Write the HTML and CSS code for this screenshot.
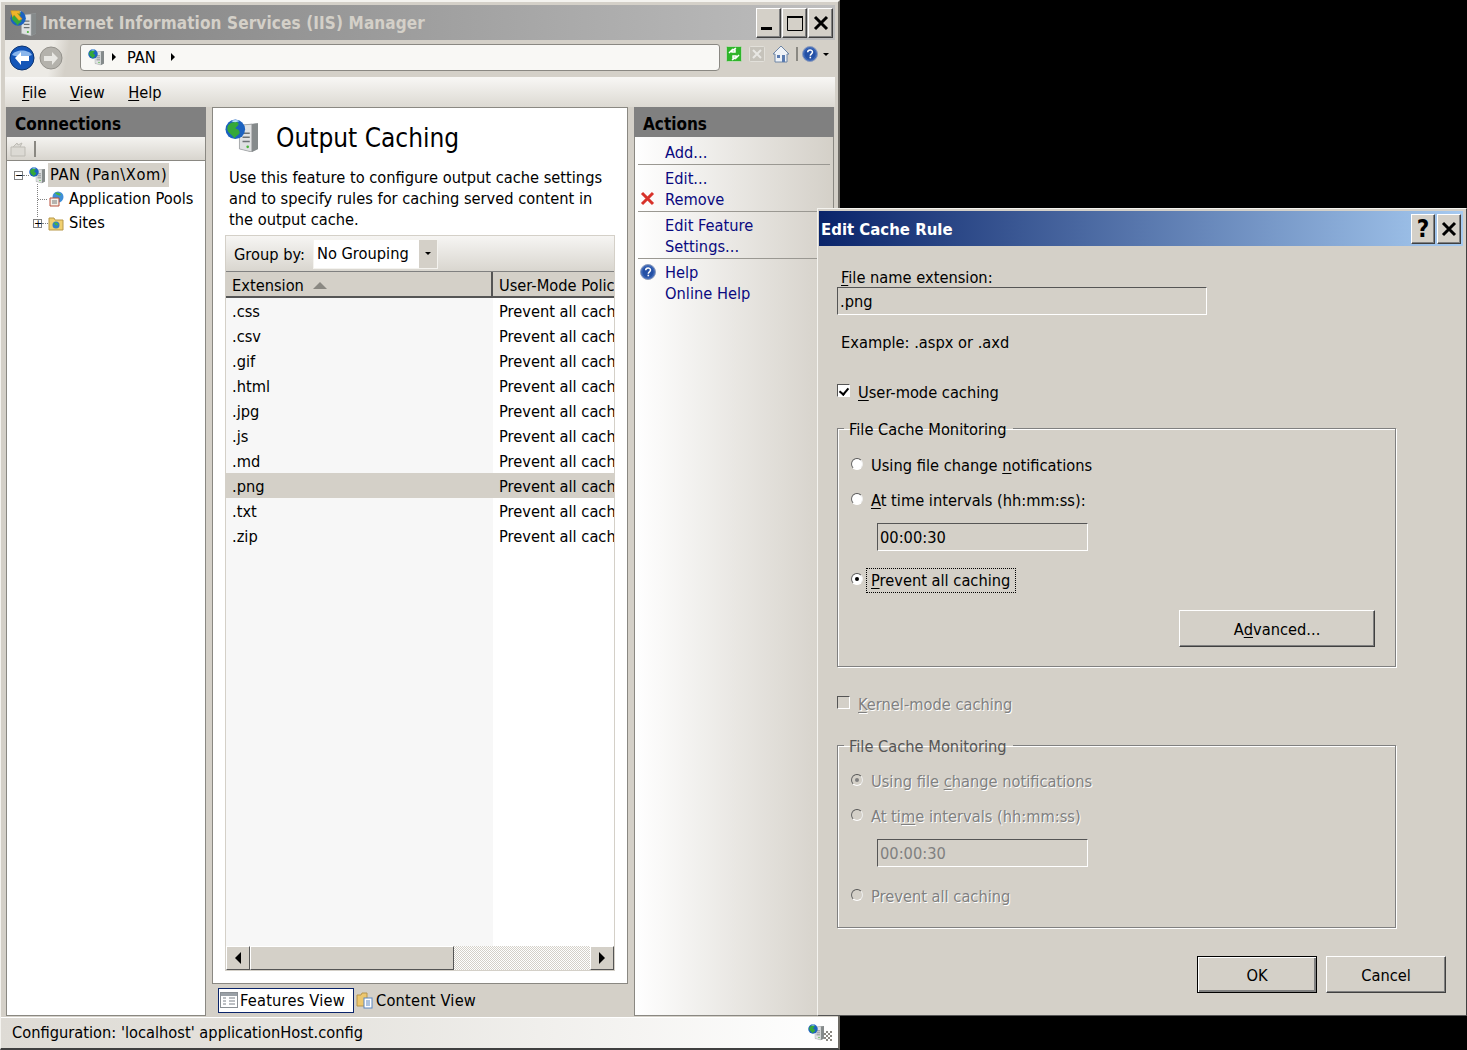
FILE: index.html
```html
<!DOCTYPE html>
<html lang="en">
<head>
    <meta charset="UTF-8">
    <title>Internet Information Services (IIS) Manager</title>
    <link rel="stylesheet" href="styles.css">
</head>
<body>
    <svg class="sprite" aria-hidden="true">
        <symbol id="server" viewBox="0 0 32 32">
            <path d="M14 6l18-2v25l-6 3-12-3z" fill="#a9adae"/>
            <path d="M26 5l6-1v25l-6 3z" fill="#858a8b"/>
            <path d="M14 6l12-1v27l-12-3z" fill="#dfe1e2" stroke="#8b8f90" stroke-width=".6"/>
            <path d="M17 13h7v1.500h-7zM17 17h7v1.500h-7zM17 21h7v1.500h-7z" fill="#6d7274"/>
            <circle cx="22" cy="27" r="1.300" fill="#49b53a"/>
            <circle cx="10" cy="10" r="9.500" fill="#1c62c0"/>
            <path d="M3 6c3-3 8-4 10-2 1 2-2 3-3 5 2 1 5 2 4 5-2 2-4 3-5 5-1-3-4-4-6-7-1-2-1-4 0-6z" fill="#35a83a"/>
            <path d="M6 2c3-1.600 6-1.300 8 0-2 1-5 2-8 0z" fill="#b5e0fa"/>
        </symbol>
        <symbol id="help" viewBox="0 0 16 16">
            <circle cx="8" cy="8" r="7.500" fill="#3d68b8" stroke="#8d9cbc"/>
            <circle cx="8" cy="8" r="5.500" fill="#2450a5"/>
            <path d="M5.700 6.300c0-3 4.800-3 4.800-.2 0 1.800-2.200 1.700-2.200 3.600" fill="none" stroke="#fff" stroke-width="1.500"/>
            <rect x="7.500" y="10.700" width="1.600" height="1.600" fill="#fff"/>
        </symbol>
    </svg>

    <div class="desktop">
        <div class="app">
            <div class="app-title">
                <svg class="app-icon" viewBox="0 0 32 32">
                    <use href="#server" width="32" height="32"/>
                    <path d="M1 1h11v4l-3-1 6 7-4 2-6-7-2 3z" fill="#f0b52a" stroke="#c98a14" stroke-width=".6"/>
                </svg>
                <span class="app-title-text">Internet Information Services (IIS) Manager</span>
                <div class="caption-btns main">
                    <span class="caption-btn wide"><svg width="16" height="16" viewBox="0 0 16 16"><rect x="0" y="12" width="11" height="3"/></svg></span>
                    <span class="caption-btn wide"><svg width="16" height="16" viewBox="0 0 16 16"><path d="M.5 2.500h15v13H.5z" fill="none" stroke="#000"/><rect x="0" y="1" width="16" height="2"/></svg></span>
                    <span class="caption-btn wide"><svg width="16" height="16" viewBox="0 0 16 16"><path d="M2 2l12 12M14 2L2 14" stroke="#000" stroke-width="3"/></svg></span>
                </div>
            </div>

            <div class="nav">
                <div class="nav-arrows">
                    <svg width="26" height="26" viewBox="0 0 26 26">
                        <circle cx="13" cy="13" r="12" fill="#1456b8" stroke="#0c3470"/>
                        <path d="M3 10c3-6 17-6 20 0-5 2-15 2-20 0z" fill="#8ab6ec"/>
                        <path d="M6 13l6-6v4h8v5h-8v4z" fill="#fff"/>
                    </svg>
                    <svg width="24" height="24" viewBox="0 0 24 24">
                        <circle cx="12" cy="12" r="11" fill="#b4b2ac" stroke="#94928c"/>
                        <path d="M19 12l-6-6v4H5v5h8v4z" fill="#e8e7e3"/>
                    </svg>
                </div>
                <div class="address">
                    <svg class="addr-icon"><use href="#server"/></svg>
                    <span class="crumb-arrow"></span>
                    <span class="crumb">PAN</span>
                    <span class="crumb-arrow"></span>
                </div>
                <div class="nav-tools">
                    <svg width="16" height="16" viewBox="0 0 16 16">
                        <rect x=".5" y=".5" width="15" height="15" rx="1" fill="#2fb52b" stroke="#b8d8b0"/>
                        <path d="M3 7l3-3v2h3V4l-2 0 3-2M13 9l-3 3v-2H7v2l2 0-3 2" fill="none" stroke="#fff" stroke-width="1.500"/>
                    </svg>
                    <svg width="16" height="16" viewBox="0 0 16 16">
                        <rect x=".5" y=".5" width="15" height="15" rx="1" fill="#c6c3bb" stroke="#e2e0da"/>
                        <path d="M4 4l8 8M12 4l-8 8" stroke="#e8e7e3" stroke-width="2"/>
                    </svg>
                    <svg width="18" height="18" viewBox="0 0 18 18">
                        <path d="M1 9l8-8 8 8h-2v8H3V9z" fill="#eef2f7" stroke="#6f86a6"/>
                        <rect x="10" y="10" width="3" height="7" fill="#5a7bb0"/>
                        <rect x="5" y="10" width="3" height="3" fill="#5a7bb0"/>
                    </svg>
                    <span class="tool-sep"></span>
                    <svg width="16" height="16"><use href="#help"/></svg>
                    <span class="tool-drop"></span>
                </div>
            </div>

            <div class="menubar">
                <span><u>F</u>ile</span>
                <span><u>V</u>iew</span>
                <span><u>H</u>elp</span>
            </div>

            <div class="panes">
                <div class="pane connections">
                    <div class="pane-head">Connections</div>
                    <div class="conn-tools">
                        <svg width="16" height="16" viewBox="0 0 16 16">
                            <path d="M1 6h14v9H1zM3 6l4-4 1 2 4-2-2 4" fill="#dcdad4" stroke="#bdbbb4"/>
                        </svg>
                        <span class="conn-sep"></span>
                    </div>
                    <div class="tree">
                        <div class="tree-row">
                            <span class="expander">&minus;</span>
                            <svg class="tree-icon"><use href="#server"/></svg>
                            <span class="tree-label selected">PAN (Pan\Xom)</span>
                        </div>
                        <div class="tree-row child">
                            <span class="tree-dots"></span>
                            <svg class="tree-icon" viewBox="0 0 16 16">
                                <circle cx="10" cy="6" r="5.500" fill="#3f8fd8"/>
                                <path d="M7 2c2-1 5 0 6 2-2 1-4 0-6-2z" fill="#49b53a"/>
                                <path d="M2 7h9v8H2z" fill="#f4f0e8" stroke="#b8503c"/>
                                <path d="M4 10h5M4 12h5" stroke="#777"/>
                            </svg>
                            <span class="tree-label">Application Pools</span>
                        </div>
                        <div class="tree-row child">
                            <span class="expander plus">+</span>
                            <svg class="tree-icon" viewBox="0 0 16 16">
                                <path d="M1 3h5l1 2h8v10H1z" fill="#f0d070" stroke="#b89848"/>
                                <circle cx="8" cy="10" r="3.500" fill="#2f80c8"/>
                                <path d="M6 8c2-1 4 0 4 2-2 1-3 0-4-2z" fill="#49b53a"/>
                            </svg>
                            <span class="tree-label">Sites</span>
                        </div>
                    </div>
                </div>

                <div class="center">
                    <div class="pane content">
                        <div class="page-head">
                            <svg class="page-icon"><use href="#server"/></svg>
                            <h1>Output Caching</h1>
                        </div>
                        <p class="page-desc">Use this feature to configure output cache settings and to specify rules for caching served content in the output cache.</p>
                        <div class="list-box">
                            <div class="group-bar">
                                <span>Group by:</span>
                                <div class="combo">
                                    <span class="combo-value">No Grouping</span>
                                    <span class="combo-btn"></span>
                                </div>
                            </div>
                            <div class="list-head">
                                <div class="col-ext">Extension <span class="sort-up"></span></div>
                                <div class="col-policy">User-Mode Policy</div>
                            </div>
                            <div class="list-body">
                                <div class="row"><div class="col-ext">.css</div><div class="col-policy">Prevent all caching</div></div>
                                <div class="row"><div class="col-ext">.csv</div><div class="col-policy">Prevent all caching</div></div>
                                <div class="row"><div class="col-ext">.gif</div><div class="col-policy">Prevent all caching</div></div>
                                <div class="row"><div class="col-ext">.html</div><div class="col-policy">Prevent all caching</div></div>
                                <div class="row"><div class="col-ext">.jpg</div><div class="col-policy">Prevent all caching</div></div>
                                <div class="row"><div class="col-ext">.js</div><div class="col-policy">Prevent all caching</div></div>
                                <div class="row"><div class="col-ext">.md</div><div class="col-policy">Prevent all caching</div></div>
                                <div class="row selected"><div class="col-ext">.png</div><div class="col-policy">Prevent all caching</div></div>
                                <div class="row"><div class="col-ext">.txt</div><div class="col-policy">Prevent all caching</div></div>
                                <div class="row"><div class="col-ext">.zip</div><div class="col-policy">Prevent all caching</div></div>
                            </div>
                            <div class="hscroll">
                                <span class="sb-btn"><span class="tri-left"></span></span>
                                <span class="sb-thumb"></span>
                                <span class="sb-track"></span>
                                <span class="sb-btn"><span class="tri-right"></span></span>
                            </div>
                        </div>
                    </div>
                    <div class="view-tabs">
                        <div class="view-tab active">
                            <svg width="18" height="18" viewBox="0 0 18 18">
                                <rect x=".5" y="1.500" width="17" height="15" fill="#fff" stroke="#8a8f94"/>
                                <rect x="1" y="2" width="16" height="3" fill="#9aa0a6"/>
                                <path d="M3 7h3M3 10h3M3 13h3M9 7h6M9 10h6M9 13h6" stroke="#7b8088"/>
                            </svg>
                            <span>Features View</span>
                        </div>
                        <div class="view-tab">
                            <svg width="18" height="18" viewBox="0 0 18 18">
                                <path d="M1 4h4l1-2h5v13H1z" fill="#edc76e" stroke="#b8964c"/>
                                <rect x="8" y="7" width="8" height="10" fill="#fff" stroke="#5a86c0"/>
                                <path d="M10 10h4M10 12h4M10 14h4" stroke="#5a86c0"/>
                            </svg>
                            <span>Content View</span>
                        </div>
                    </div>
                </div>

                <div class="pane actions">
                    <div class="pane-head">Actions</div>
                    <div class="action-group first">
                        <a>Add...</a>
                    </div>
                    <div class="action-group">
                        <a>Edit...</a>
                        <a>
                            <svg class="action-icon" width="15" height="15" viewBox="0 0 15 15"><path d="M2 2l11 11M13 2L2 13" stroke="#d8322a" stroke-width="3"/></svg>
                            Remove
                        </a>
                    </div>
                    <div class="action-group">
                        <a>Edit Feature<br>Settings...</a>
                    </div>
                    <div class="action-group last">
                        <a>
                            <svg class="action-icon" width="16" height="16"><use href="#help"/></svg>
                            Help
                        </a>
                        <a>Online Help</a>
                    </div>
                </div>
            </div>

            <div class="statusbar">
                <span>Configuration: 'localhost' applicationHost.config</span>
                <svg class="status-icon"><use href="#server"/></svg>
                <span class="grip"></span>
            </div>
        </div>

        <div class="dialog">
            <div class="dlg-title">
                <span>Edit Cache Rule</span>
                <div class="caption-btns">
                    <span class="caption-btn dlg"><b class="q">?</b></span>
                    <span class="caption-btn dlg"><svg width="16" height="16" viewBox="0 0 16 16"><path d="M2 2l12 12M14 2L2 14" stroke="#000" stroke-width="3"/></svg></span>
                </div>
            </div>
            <div class="dlg-body">
                <div class="field-label"><u>F</u>ile name extension:</div>
                <div class="sunken ext-input">.png</div>
                <div class="example">Example: .aspx or .axd</div>

                <div class="check-row">
                    <span class="checkbox on"></span>
                    <span><u>U</u>ser-mode caching</span>
                </div>
                <fieldset class="group">
                    <legend>File Cache Monitoring</legend>
                    <div class="radio-row r1"><span class="radio"></span><span>Using file change <u>n</u>otifications</span></div>
                    <div class="radio-row r2"><span class="radio"></span><span><u>A</u>t time intervals (hh:mm:ss):</span></div>
                    <div class="sunken time-input">00:00:30</div>
                    <div class="radio-row r3"><span class="radio on"></span><span class="focused"><u>P</u>revent all caching</span></div>
                    <div class="adv-row"><span class="btn adv">A<u>d</u>vanced...</span></div>
                </fieldset>

                <div class="check-row disabled second">
                    <span class="checkbox off"></span>
                    <span><u>K</u>ernel-mode caching</span>
                </div>
                <fieldset class="group lower disabled">
                    <legend>File Cache Monitoring</legend>
                    <div class="radio-row r1"><span class="radio on"></span><span>Using file <u>c</u>hange notifications</span></div>
                    <div class="radio-row r2"><span class="radio"></span><span>At ti<u>m</u>e intervals (hh:mm:ss)</span></div>
                    <div class="sunken time-input">00:00:30</div>
                    <div class="radio-row r3"><span class="radio"></span><span>Prevent all caching</span></div>
                </fieldset>

                <div class="dlg-buttons">
                    <span class="btn default">OK</span>
                    <span class="btn">Cancel</span>
                </div>
            </div>
        </div>
    </div>
</body>
</html>
```

FILE: styles.css
```css
* {
    box-sizing: border-box;
}
html, body {
    margin: 0;
    height: 100%;
    overflow: hidden;
    background: #000;
}
body {
    font-family: "DejaVu Sans", Tahoma, sans-serif;
    font-stretch: condensed;
    font-size: 16.3px;
    color: #000;
}
u {
    text-underline-offset: 2px;
}
.sprite {
    width: 0;
    height: 0;
    display: block;
}
.desktop {
    position: relative;
    width: 1467px;
    height: 1050px;
    background: #000;
}

/* main window */
.app {
    width: 840px;
    height: 1050px;
    display: flex;
    flex-direction: column;
    background: #d4d0c8;
    border-top: 2px solid #f4f3ef;
    border-left: 1px solid #f4f3ef;
    border-right: 2px solid #6d6a64;
    border-bottom: 2px solid #404040;
    padding: 3px 3px 0 4px;
}
.app-title {
    height: 35px;
    flex: none;
    display: flex;
    align-items: center;
    padding: 0 2px 0 5px;
    background: linear-gradient(to right, #7f7f7f, #bebebe);
    color: #d4d0c8;
    font-weight: bold;
    font-size: 17px;
    letter-spacing: .12px;
}
.app-icon {
    width: 26px;
    height: 26px;
    margin-right: 6px;
}
.app-title-text {
    flex: 1;
    white-space: nowrap;
}
.caption-btns {
    display: flex;
    gap: 2px;
}
.caption-btns.main {
    gap: 1px;
}
.caption-btn {
    display: flex;
    align-items: center;
    justify-content: center;
    background: #d4d0c8;
    color: #000;
    border: 1px solid;
    border-color: #fff #404040 #404040 #fff;
    box-shadow: inset -1px -1px 0 #808080;
}
.caption-btn.wide {
    width: 25px;
    height: 30px;
}
.caption-btn.dlg {
    width: 24px;
    height: 30px;
}
.caption-btn .q {
    font-size: 24px;
    line-height: 1;
}

/* back / address bar */
.nav {
    height: 37px;
    flex: none;
    display: flex;
    align-items: center;
}
.nav-arrows {
    width: 75px;
    padding: 0 0 2px 4px;
    display: flex;
    align-items: center;
    gap: 4px;
    height: 37px;
    background: linear-gradient(100deg, #eceae5 60%, #d4d0c8 80%);
}
.address {
    width: 640px;
    height: 27px;
    display: flex;
    align-items: center;
    background: #f9f8f5;
    border: 1px solid #8a8882;
    border-radius: 3px 3px 4px 4px;
    padding-left: 7px;
    margin-bottom: 3px;
}
.addr-icon {
    width: 16px;
    height: 18px;
    margin-right: 8px;
}
.crumb-arrow {
    width: 0;
    height: 0;
    border-left: 4px solid #000;
    border-top: 4px solid transparent;
    border-bottom: 4px solid transparent;
}
.crumb {
    margin: 1px 15px 0 11px;
}
.nav-tools {
    display: flex;
    align-items: center;
    padding-left: 6px;
    gap: 7px;
    margin-bottom: 9px;
}
.tool-sep {
    width: 2px;
    height: 14px;
    background: #8a8882;
    margin-left: -1px;
    margin-right: -3px;
}
.tool-drop {
    width: 0;
    height: 0;
    border-top: 3px solid #000;
    border-left: 3px solid transparent;
    border-right: 3px solid transparent;
    margin-left: -2px;
}

/* menu */
.menubar {
    height: 30px;
    flex: none;
    display: flex;
    align-items: center;
    gap: 23.5px;
    padding: 0 0 0 17px;
    background: linear-gradient(to bottom, #f8f7f5, #dcd9d2);
}

/* three panes */
.panes {
    flex: 1;
    min-height: 0;
    display: flex;
    gap: 6px;
    padding: 0 0 0 1px;
}
.pane {
    border: 1px solid #8a8882;
    background: #fff;
}
.pane-head {
    height: 30px;
    padding: 7px 0 0 9px;
    background: #808080;
    font-weight: bold;
    font-size: 17px;
    line-height: 20px;
    margin: -1px -1px 0;
}
.connections {
    width: 200px;
    display: flex;
    flex-direction: column;
}
.conn-tools {
    height: 24px;
    flex: none;
    display: flex;
    align-items: center;
    gap: 8px;
    padding-left: 3px;
    background: linear-gradient(to bottom, #f4f3f0, #d8d5ce);
    border-bottom: 1px solid #8a8882;
}
.conn-sep {
    width: 2px;
    height: 16px;
    background: #8a8882;
}
.tree {
    padding-top: 2px;
}
.tree-row {
    height: 24px;
    display: flex;
    align-items: center;
    white-space: nowrap;
    padding-left: 7px;
}
.expander {
    width: 9px;
    height: 9px;
    border: 1px solid #808080;
    font-size: 11px;
    line-height: 7px;
    text-align: center;
    margin-right: 6px;
    background: #fff;
    flex: none;
    position: relative;
}
.expander::after {
    content: "";
    position: absolute;
    left: 8px;
    top: 3px;
    width: 6px;
    border-top: 1px dotted #808080;
}
.expander.plus {
    margin-left: 19px;
    margin-right: 6px;
}
.tree-dots {
    width: 9px;
    height: 1px;
    margin-left: 24px;
    margin-right: 1px;
    border-top: 1px dotted #808080;
    position: relative;
}
.tree-dots::before {
    content: "";
    position: absolute;
    left: -1px;
    top: -16px;
    height: 33px;
    border-left: 1px dotted #808080;
}
.tree-icon {
    width: 16px;
    height: 18px;
    flex: none;
    margin-right: 3px;
}
.tree-label {
    padding: 0 2px;
    height: 24px;
    line-height: 24px;
}
.tree-label.selected {
    background: #d4d0c8;
    letter-spacing: .6px;
}

/* center */
.center {
    width: 416px;
    display: flex;
    flex-direction: column;
}
.content {
    flex: 1;
    min-height: 0;
    display: flex;
    flex-direction: column;
    padding: 0 13px 12px 12px;
}
.page-head {
    height: 59px;
    flex: none;
    display: flex;
    align-items: flex-start;
}
.page-icon {
    width: 33px;
    height: 33px;
    margin-top: 11px;
    flex: none;
}
h1 {
    margin: 11px 0 0 18px;
    font-weight: normal;
    font-size: 26px;
    line-height: 38px;
    white-space: nowrap;
}
.page-desc {
    margin: 0 0 5px 4px;
    line-height: 21px;
    width: 385px;
}
.list-box {
    flex: 1;
    min-height: 0;
    display: flex;
    flex-direction: column;
    width: 390px;
    border: 1px solid #d4d0c8;
    overflow: hidden;
    background: #fff;
}
.group-bar {
    height: 35px;
    flex: none;
    display: flex;
    align-items: center;
    padding: 2px 0 0 8px;
    gap: 8px;
    background: linear-gradient(to bottom, #f6f5f3, #d9d6cf);
}
.combo {
    display: flex;
    width: 125px;
    height: 30px;
    margin-top: -2px;
    background: #fff;
    border: 1px solid #f4f3ef;
}
.combo-value {
    flex: 1;
    padding: 4px 0 0 3px;
}
.combo-btn {
    width: 18px;
    background: #d4d0c8;
    position: relative;
}
.combo-btn::after {
    content: "";
    position: absolute;
    top: 12px;
    left: 6px;
    border-top: 3px solid #000;
    border-left: 3px solid transparent;
    border-right: 3px solid transparent;
}
.list-head {
    height: 27px;
    flex: none;
    display: flex;
    background: #d4d0c8;
    border-top: 1px solid #808080;
    border-bottom: 2px solid #555;
    white-space: nowrap;
}
.list-head .col-ext {
    border-right: 2px solid #555;
    height: 24px;
    line-height: 28px;
}
.list-head .col-policy {
    line-height: 28px;
}
.col-ext {
    width: 267px;
    flex: none;
    padding-left: 6px;
}
.col-policy {
    flex: 1;
    padding-left: 6px;
    overflow: hidden;
    white-space: nowrap;
}
.sort-up {
    display: inline-block;
    margin: 0 0 2px 4px;
    border-bottom: 7px solid #8a8882;
    border-left: 7px solid transparent;
    border-right: 7px solid transparent;
}
.list-body {
    flex: 1;
    min-height: 0;
    background: linear-gradient(to right, #f7f7f7 267px, #fff 267px);
}
.row {
    height: 25px;
    display: flex;
    line-height: 27px;
}
.row.selected {
    background: #d4d0c8;
}
.hscroll {
    height: 24px;
    flex: none;
    display: flex;
}
.sb-btn {
    width: 24px;
    flex: none;
    display: flex;
    align-items: center;
    justify-content: center;
    background: #d4d0c8;
    border: 1px solid;
    border-color: #fff #555 #555 #fff;
}
.sb-thumb {
    width: 204px;
    flex: none;
    background: #d4d0c8;
    border: 1px solid;
    border-color: #fff #555 #555 #fff;
}
.sb-track {
    flex: 1;
    background: conic-gradient(#fff 25%, #d4d0c8 0 50%, #fff 0 75%, #d4d0c8 0) 0 0 / 2px 2px;
}
.tri-left {
    border-right: 6px solid #000;
    border-top: 6px solid transparent;
    border-bottom: 6px solid transparent;
}
.tri-right {
    border-left: 6px solid #000;
    border-top: 6px solid transparent;
    border-bottom: 6px solid transparent;
}
.view-tabs {
    height: 32px;
    flex: none;
    display: flex;
    align-items: center;
    padding-left: 6px;
}
.view-tab {
    height: 25px;
    display: flex;
    align-items: center;
    gap: 2px;
    padding: 0 7px 0 1px;
    white-space: nowrap;
    letter-spacing: .2px;
}
.view-tab.active {
    width: 136px;
    background: #fff;
    border: 1px solid #0a246a;
    padding: 0 0 0 1px;
    margin-right: 1px;
}

/* actions */
.actions {
    width: 200px;
    background: linear-gradient(to right, #fff, #d4d0c8);
    border-color: #8a8882;
}
.action-group {
    margin: 0 3px 0 3px;
    padding: 3px 0 1px 27px;
    border-bottom: 1px solid #9a9892;
}
.action-group.first {
    padding-top: 5px;
}
.action-group.last {
    border-bottom: 0;
}
.action-group a {
    display: block;
    position: relative;
    line-height: 21px;
    white-space: nowrap;
    color: #0a0a80;
}
.action-icon {
    position: absolute;
    left: -25px;
    top: 2px;
}

/* status bar */
.statusbar {
    height: 31px;
    flex: none;
    display: flex;
    align-items: center;
    margin: 1px -3px 0 -4px;
    padding: 0 6px 2px 11px;
    background: linear-gradient(to right, #dedbd5, #e6e4df 40%, #fff);
    border-top: 1px solid #fff;
}
.statusbar span:first-child {
    flex: 1;
}
.status-icon {
    width: 16px;
    height: 18px;
}
.grip {
    width: 8px;
    height: 10px;
    margin-top: 8px;
    background: conic-gradient(#8a8882 25%, transparent 0 50%, #8a8882 0 75%, transparent 0) 0 0 / 4px 4px;
}

/* dialog */
.dialog {
    position: absolute;
    left: 817px;
    top: 208px;
    width: 650px;
    height: 808px;
    display: flex;
    flex-direction: column;
    background: #d4d0c8;
    border: 1px solid;
    border-color: #f4f3ef #404040 #555 #f4f3ef;
    padding: 2px 3px 0 1px;
}
.dlg-title {
    height: 35px;
    flex: none;
    display: flex;
    align-items: center;
    justify-content: space-between;
    padding: 0 2px;
    background: linear-gradient(to right, #0a246a, #a6caf0);
    color: #fff;
    font-weight: bold;
    font-size: 16.6px;
}
.dlg-title > span {
    padding-top: 2px;
}
.dlg-body {
    flex: 1;
    padding: 22px 0 0 18px;
    display: flex;
    flex-direction: column;
}
.field-label {
    padding-left: 4px;
    line-height: 19px;
}
.sunken {
    height: 28px;
    background: #d4d0c8;
    border: 1px solid;
    border-color: #555 #fff #fff #555;
    padding-left: 2px;
    line-height: 28px;
}
.ext-input {
    width: 370px;
}
.example {
    margin: 17px 0 0 4px;
    line-height: 21px;
}
.check-row {
    display: flex;
    align-items: center;
    height: 21px;
    margin-top: 29px;
}
.check-row.second {
    margin-top: 27px;
}
.checkbox {
    width: 13px;
    height: 13px;
    margin: -4px 8px 0 0;
    flex: none;
    border: 1px solid;
    border-color: #555 #fff #fff #555;
}
.checkbox.on {
    background: #fff;
    position: relative;
}
.checkbox.on::after {
    content: "";
    position: absolute;
    left: 3px;
    top: 1px;
    width: 4px;
    height: 7px;
    border: solid #000;
    border-width: 0 2px 2px 0;
    transform: rotate(40deg);
}
.group {
    margin: 15px 0 0;
    padding: 0;
    width: 559px;
    height: 249px;
    border: 1px solid #808080;
    box-shadow: 1px 1px 0 #fff, inset 1px 1px 0 #fff;
    min-width: 0;
}
.group.lower {
    height: 193px;
    margin-top: 20px;
}
legend {
    margin-left: 6px;
    padding: 2px 6px 0 5px;
    line-height: 19px;
    color: #000;
}
.radio-row {
    display: flex;
    align-items: center;
    height: 21px;
    padding-left: 13px;
}
.radio-row.r1 {
    margin-top: 16px;
}
.lower .radio-row.r1 {
    margin-top: 15px;
}
.radio-row.r2 {
    margin-top: 14px;
}
.radio-row.r3 {
    margin-top: 19px;
}
.radio {
    width: 12px;
    height: 12px;
    margin: -3px 8px 0 0;
    flex: none;
    border-radius: 50%;
    background: #fff;
    border: 1px solid;
    border-color: #555 #eee #fff #666;
    position: relative;
}
.radio.on::after {
    content: "";
    position: absolute;
    left: 3px;
    top: 3px;
    width: 4px;
    height: 4px;
    border-radius: 50%;
    background: #000;
}
.focused {
    padding: 1px 4px 1px 3px;
    margin-left: -3px;
    outline: 1px dotted #000;
    outline-offset: 1px;
}
.time-input {
    width: 211px;
    margin: 12px 0 0 39px;
}
.adv-row {
    display: flex;
    justify-content: flex-end;
    padding-right: 20px;
    margin-top: 19px;
}
.btn {
    width: 120px;
    height: 37px;
    display: flex;
    align-items: center;
    justify-content: center;
    padding-top: 1px;
    border: 1px solid;
    border-color: #fff #404040 #404040 #fff;
    box-shadow: inset -1px -1px 0 #808080;
}
.btn.adv {
    width: 196px;
}
.btn.default {
    outline: 1px solid #000;
    outline-offset: -1px;
    border-color: #000;
    box-shadow: inset 1px 1px 0 #fff, inset -2px -2px 0 #808080;
}
.dlg-buttons {
    display: flex;
    gap: 9px;
    justify-content: flex-end;
    margin-top: 28px;
    padding-right: 17px;
}

/* greyed out section */
.disabled {
    color: #808080;
    text-shadow: 1px 1px 0 #fff;
}
.disabled .radio {
    background: #d4d0c8;
}
.disabled .radio.on::after {
    background: #808080;
}
.disabled .time-input {
    color: #808080;
    text-shadow: none;
}
.disabled legend {
    color: #555;
    text-shadow: none;
}
```
